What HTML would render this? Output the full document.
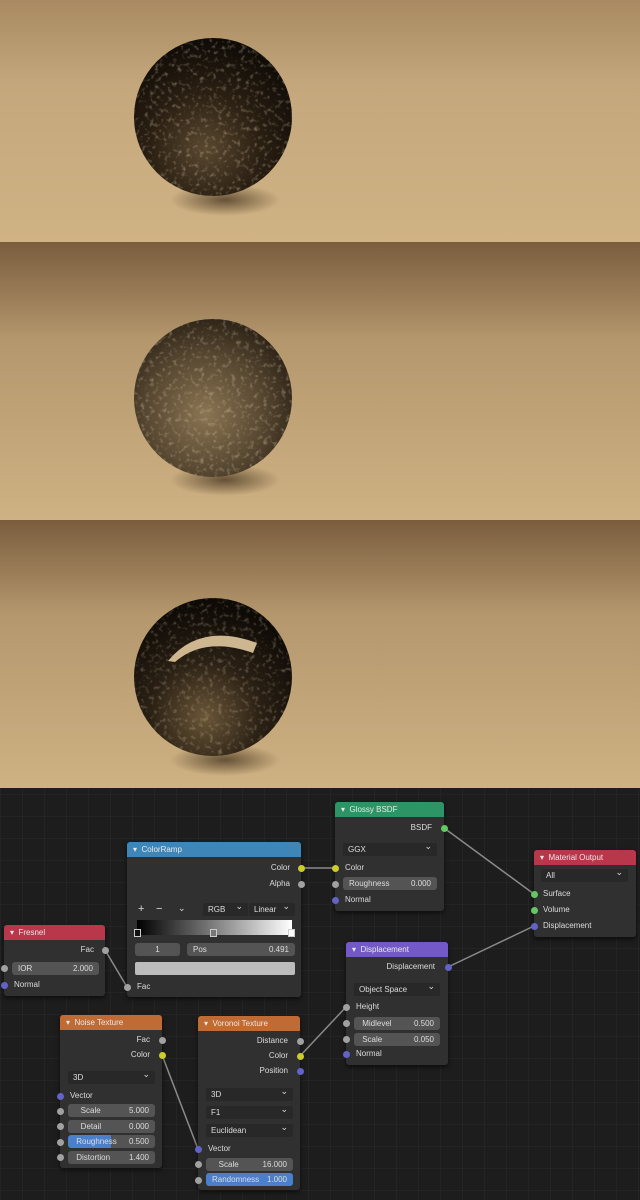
<!DOCTYPE html>
<html><head><meta charset="utf-8">
<style>
*{margin:0;padding:0;box-sizing:border-box}
body{width:640px;height:1200px;overflow:hidden;background:#1d1d1d;font-family:"Liberation Sans",sans-serif;position:relative}
.p{position:absolute;left:0;width:640px;overflow:hidden}
.ne{position:absolute;left:0;top:788px;width:640px;height:412px;background-color:#1d1d1d;
background-image:linear-gradient(#242424 1px,transparent 1px),linear-gradient(90deg,#242424 1px,transparent 1px);background-size:22px 22px;background-position:0 6px}
.n{position:absolute;background:#303030;border-radius:3px;box-shadow:0 2px 5px rgba(0,0,0,.6)}
.h{position:absolute;border-radius:3px 3px 0 0;color:#e8e8e8;font-size:8px;line-height:15px;padding-left:6px;height:15px}
.t{position:absolute;font-size:8px;line-height:10px;height:10px;color:#dcdcdc;white-space:nowrap}
.r{text-align:right}
.f{position:absolute;background:#545454;border-radius:3px;font-size:8px;color:#ddd;line-height:13px;height:13px;padding:0 6px}
.d{position:absolute;background:#282828;border-radius:2px;font-size:8px;color:#ddd;line-height:13px;height:13px;padding:0 5px}
.d:after{content:"⌄";position:absolute;right:5px;top:-3px;font-size:9px}
.s{position:absolute;width:7px;height:7px;border-radius:50%;background:#a1a1a1;margin:-3.5px 0 0 -3.5px}
.y{background:#cccc2a}.b{background:#6363c7}.g{background:#63c763}
.v{float:right}
</style></head><body>

<svg class="p" style="top:0" width="640" height="788" viewBox="0 0 640 788">
<defs>
<linearGradient id="bg1" x1="0" y1="0" x2="0" y2="1"><stop offset="0" stop-color="#a98a62"/><stop offset=".35" stop-color="#c4a77c"/><stop offset="1" stop-color="#d0b384"/></linearGradient>
<linearGradient id="bg2" x1="0" y1="0" x2="0" y2="1"><stop offset="0" stop-color="#7a5d3d"/><stop offset=".35" stop-color="#b4976d"/><stop offset="1" stop-color="#cfb283"/></linearGradient>
<radialGradient id="sh" cx=".5" cy=".5" r=".5"><stop offset="0" stop-color="#3a2a18" stop-opacity=".7"/><stop offset="1" stop-color="#3a2a18" stop-opacity="0"/></radialGradient>
<radialGradient id="s1" cx=".45" cy=".7" r=".7"><stop offset="0" stop-color="#5a4830"/><stop offset=".5" stop-color="#2a1f12"/><stop offset="1" stop-color="#0e0a06"/></radialGradient>
<radialGradient id="s2" cx=".45" cy=".6" r=".7"><stop offset="0" stop-color="#8a7452"/><stop offset=".5" stop-color="#5a4a33"/><stop offset="1" stop-color="#1e160d"/></radialGradient>
<radialGradient id="s3" cx=".45" cy=".75" r=".7"><stop offset="0" stop-color="#6a5638"/><stop offset=".5" stop-color="#2a2014"/><stop offset="1" stop-color="#0e0a06"/></radialGradient>
<filter id="nz"><feTurbulence type="fractalNoise" baseFrequency=".22" numOctaves="2" seed="3"/><feColorMatrix values="0 0 0 0 .85  0 0 0 0 .72  0 0 0 0 .5  0 0 0 3 -1.6"/></filter>
<clipPath id="c1"><circle cx="213" cy="117" r="79"/></clipPath>
<clipPath id="c2"><circle cx="213" cy="398" r="79"/></clipPath>
<clipPath id="c3"><circle cx="213" cy="677" r="79"/></clipPath>
</defs>
<rect x="0" y="0" width="640" height="242" fill="url(#bg1)"/>
<rect x="0" y="242" width="640" height="278" fill="url(#bg2)"/>
<rect x="0" y="520" width="640" height="268" fill="url(#bg2)"/>
<ellipse cx="225" cy="200" rx="55" ry="16" fill="url(#sh)"/>
<ellipse cx="225" cy="480" rx="55" ry="16" fill="url(#sh)"/>
<ellipse cx="225" cy="760" rx="55" ry="16" fill="url(#sh)"/>
<circle cx="213" cy="117" r="79" fill="url(#s1)"/>
<rect x="130" y="36" width="170" height="170" filter="url(#nz)" clip-path="url(#c1)" opacity=".35"/>
<circle cx="213" cy="398" r="79" fill="url(#s2)"/>
<rect x="130" y="317" width="170" height="170" filter="url(#nz)" clip-path="url(#c2)" opacity=".35"/>
<circle cx="213" cy="677" r="79" fill="url(#s3)"/>
<rect x="130" y="596" width="170" height="170" filter="url(#nz)" clip-path="url(#c3)" opacity=".3"/>
<path d="M168 661 Q200 622 257 643 L253 653 Q205 636 175 662 Z" fill="#cdb690"/>
</svg>

<div class="ne"></div>

<svg style="position:absolute;left:0;top:0" width="640" height="1200">
<g stroke="#8a8a8a" stroke-width="1.5" fill="none">
<line x1="105" y1="950" x2="127" y2="987"/>
<line x1="301" y1="868" x2="335" y2="868"/>
<line x1="444" y1="828" x2="534" y2="894"/>
<line x1="448" y1="967" x2="534" y2="926"/>
<line x1="162" y1="1055" x2="198" y2="1149"/>
<line x1="300" y1="1056" x2="346" y2="1007"/>
</g></svg>

<!-- Fresnel -->
<div class="n" style="left:4px;top:925px;width:101px;height:71px"></div>
<div class="h" style="left:4px;top:925px;width:101px;background:#b8374a">▾&nbsp; Fresnel</div>
<div class="t r" style="left:4px;width:90px;top:945px">Fac</div>
<div class="f" style="left:12px;top:962px;width:87px">IOR<span class="v">2.000</span></div>
<div class="t" style="left:14px;top:980px">Normal</div>
<div class="s" style="left:105px;top:950px"></div>
<div class="s" style="left:4px;top:968px"></div>
<div class="s b" style="left:4px;top:985px"></div>

<!-- ColorRamp -->
<div class="n" style="left:127px;top:842px;width:174px;height:155px"></div>
<div class="h" style="left:127px;top:842px;width:174px;background:#3f86b8">▾&nbsp; ColorRamp</div>
<div class="t r" style="left:127px;width:163px;top:863px">Color</div>
<div class="t r" style="left:127px;width:163px;top:879px">Alpha</div>
<div class="t" style="left:138px;top:904px;font-size:11px;line-height:11px">+</div>
<div class="t" style="left:156px;top:904px;font-size:11px;line-height:11px">−</div>
<div class="t" style="left:178px;top:903px;font-size:9px">⌄</div>
<div class="d" style="left:203px;top:903px;width:45px">RGB</div>
<div class="d" style="left:249px;top:903px;width:46px">Linear</div>
<div style="position:absolute;left:137px;top:920px;width:155px;height:15px;background:linear-gradient(90deg,#000,#fff);"></div>
<div style="position:absolute;left:134px;top:929px;width:7px;height:8px;background:#111;border:1px solid #ccc"></div>
<div style="position:absolute;left:210px;top:929px;width:7px;height:8px;background:#777;border:1px solid #ccc"></div>
<div style="position:absolute;left:288px;top:929px;width:7px;height:8px;background:#fff;border:1px solid #ccc"></div>
<div class="f" style="left:135px;top:943px;width:45px;text-align:center">1</div>
<div class="f" style="left:187px;top:943px;width:108px">Pos<span class="v">0.491</span></div>
<div style="position:absolute;left:135px;top:962px;width:160px;height:13px;background:#bcbcbc;border-radius:2px"></div>
<div class="t" style="left:137px;top:982px">Fac</div>
<div class="s y" style="left:301px;top:868px"></div>
<div class="s" style="left:301px;top:884px"></div>
<div class="s" style="left:127px;top:987px"></div>

<!-- Glossy -->
<div class="n" style="left:335px;top:802px;width:109px;height:109px"></div>
<div class="h" style="left:335px;top:802px;width:109px;background:#2d9565">▾&nbsp; Glossy BSDF</div>
<div class="t r" style="left:335px;width:97px;top:823px">BSDF</div>
<div class="d" style="left:343px;top:843px;width:94px">GGX</div>
<div class="t" style="left:345px;top:863px">Color</div>
<div class="f" style="left:343px;top:877px;width:94px">Roughness<span class="v">0.000</span></div>
<div class="t" style="left:345px;top:895px">Normal</div>
<div class="s g" style="left:444px;top:828px"></div>
<div class="s y" style="left:335px;top:868px"></div>
<div class="s" style="left:335px;top:884px"></div>
<div class="s b" style="left:335px;top:900px"></div>

<!-- Material Output -->
<div class="n" style="left:534px;top:850px;width:102px;height:87px"></div>
<div class="h" style="left:534px;top:850px;width:102px;background:#b8374a">▾&nbsp; Material Output</div>
<div class="d" style="left:541px;top:869px;width:87px">All</div>
<div class="t" style="left:543px;top:889px">Surface</div>
<div class="t" style="left:543px;top:905px">Volume</div>
<div class="t" style="left:543px;top:921px">Displacement</div>
<div class="s g" style="left:534px;top:894px"></div>
<div class="s g" style="left:534px;top:910px"></div>
<div class="s b" style="left:534px;top:926px"></div>

<!-- Displacement -->
<div class="n" style="left:346px;top:942px;width:102px;height:123px"></div>
<div class="h" style="left:346px;top:942px;width:102px;background:#7358c8">▾&nbsp; Displacement</div>
<div class="t r" style="left:346px;width:89px;top:962px">Displacement</div>
<div class="d" style="left:354px;top:983px;width:86px">Object Space</div>
<div class="t" style="left:356px;top:1002px">Height</div>
<div class="f" style="left:354px;top:1017px;width:86px">&nbsp;Midlevel<span class="v">0.500</span></div>
<div class="f" style="left:354px;top:1033px;width:86px">&nbsp;Scale<span class="v">0.050</span></div>
<div class="t" style="left:356px;top:1049px">Normal</div>
<div class="s b" style="left:448px;top:967px"></div>
<div class="s" style="left:346px;top:1007px"></div>
<div class="s" style="left:346px;top:1023px"></div>
<div class="s" style="left:346px;top:1039px"></div>
<div class="s b" style="left:346px;top:1054px"></div>

<!-- Noise -->
<div class="n" style="left:60px;top:1015px;width:102px;height:153px"></div>
<div class="h" style="left:60px;top:1015px;width:102px;background:#c06a34">▾&nbsp; Noise Texture</div>
<div class="t r" style="left:60px;width:90px;top:1035px">Fac</div>
<div class="t r" style="left:60px;width:90px;top:1050px">Color</div>
<div class="d" style="left:68px;top:1071px;width:87px">3D</div>
<div class="t" style="left:70px;top:1091px">Vector</div>
<div class="f" style="left:68px;top:1104px;width:87px">&nbsp;&nbsp;&nbsp;Scale<span class="v">5.000</span></div>
<div class="f" style="left:68px;top:1120px;width:87px">&nbsp;&nbsp;&nbsp;Detail<span class="v">0.000</span></div>
<div class="f" style="left:68px;top:1135px;width:87px;background:linear-gradient(90deg,#4a7fcc 0,#4a7fcc 43px,#545454 43px)">&nbsp;Roughness<span class="v">0.500</span></div>
<div class="f" style="left:68px;top:1151px;width:87px">&nbsp;Distortion<span class="v">1.400</span></div>
<div class="s" style="left:162px;top:1040px"></div>
<div class="s y" style="left:162px;top:1055px"></div>
<div class="s b" style="left:60px;top:1096px"></div>
<div class="s" style="left:60px;top:1111px"></div>
<div class="s" style="left:60px;top:1126px"></div>
<div class="s" style="left:60px;top:1142px"></div>
<div class="s" style="left:60px;top:1157px"></div>

<!-- Voronoi -->
<div class="n" style="left:198px;top:1016px;width:102px;height:174px"></div>
<div class="h" style="left:198px;top:1016px;width:102px;background:#c06a34">▾&nbsp; Voronoi Texture</div>
<div class="t r" style="left:198px;width:90px;top:1036px">Distance</div>
<div class="t r" style="left:198px;width:90px;top:1051px">Color</div>
<div class="t r" style="left:198px;width:90px;top:1066px">Position</div>
<div class="d" style="left:206px;top:1088px;width:87px">3D</div>
<div class="d" style="left:206px;top:1106px;width:87px">F1</div>
<div class="d" style="left:206px;top:1124px;width:87px">Euclidean</div>
<div class="t" style="left:208px;top:1144px">Vector</div>
<div class="f" style="left:206px;top:1158px;width:87px">&nbsp;&nbsp;&nbsp;Scale<span class="v">16.000</span></div>
<div class="f" style="left:206px;top:1173px;width:87px;background:#4a7fcc">Randomness<span class="v">1.000</span></div>
<div class="s" style="left:300px;top:1041px"></div>
<div class="s y" style="left:300px;top:1056px"></div>
<div class="s b" style="left:300px;top:1071px"></div>
<div class="s b" style="left:198px;top:1149px"></div>
<div class="s" style="left:198px;top:1164px"></div>
<div class="s" style="left:198px;top:1180px"></div>

</body></html>
